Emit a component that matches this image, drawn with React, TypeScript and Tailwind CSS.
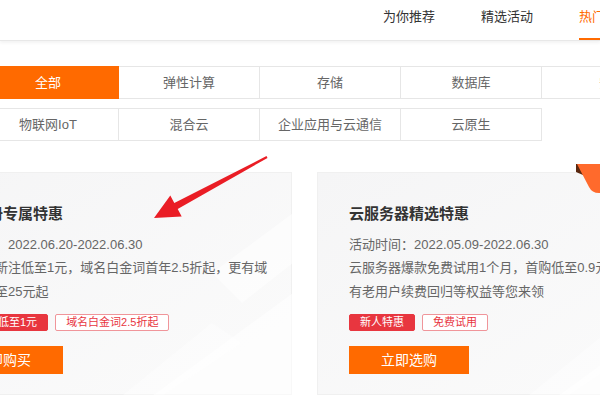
const navItems = ["为你推荐", "精选活动", "热门活动"];

const row1 = ["全部", "弹性计算", "存储", "数据库", "安全"];
const row2 = ["物联网IoT", "混合云", "企业应用与云通信", "云原生"];

interface Offer {
  title: string;
  time: string;
  lines: string[];
  tags: string[];
  button: string;
  badge?: boolean;
}

const offers: Offer[] = [
  {
    title: "域名注册专属特惠",
    time: "2022.06.20-2022.06.30",
    lines: ["热门域名新注低至1元，域名白金词首年2.5折起，更有域", "名转入低至25元起"],
    tags: ["域名新注低至1元", "域名白金词2.5折起"],
    button: "立即购买",
  },
  {
    title: "云服务器精选特惠",
    time: "2022.05.09-2022.06.30",
    lines: ["云服务器爆款免费试用1个月，首购低至0.9元起，更", "有老用户续费回归等权益等您来领"],
    tags: ["新人特惠", "免费试用"],
    button: "立即选购",
    badge: true,
  },
];

function TabRow({ items, active }: { items: string[]; active?: number }) {
  return (
    <div className="flex">
      {items.map((t, i) => (
        <div
          key={t}
          className={
            "w-[142px] h-[33px] shrink-0 flex items-center justify-center border text-[13px] " +
            (i > 0 ? "-ml-px " : "") +
            (i === active
              ? "bg-[#ff6a00] border-[#ff6a00] text-white relative"
              : "bg-white border-[#e6e6e6] text-[#666]")
          }
        >
          {t}
        </div>
      ))}
    </div>
  );
}

function OfferCard({ offer }: { offer: Offer }) {
  return (
    <div className="relative w-[381px] h-[223px] shrink-0 border border-[#f0f0f0] bg-gradient-to-br from-[#f5f5f6] to-[#fbfbfb] pl-[31px] pt-[31px]">
      <svg className="absolute inset-0 pointer-events-none" width="381" height="223" viewBox="0 0 381 223">
        <polygon points="240,223 381,120 381,223" fill="#ffffff" opacity="0.55" />
        <polygon points="300,100 381,40 381,90 330,130" fill="#ffffff" opacity="0.5" />
        <polygon points="210,223 300,150 330,170 250,223" fill="#ffffff" opacity="0.35" />
      </svg>
      {offer.badge && (
        <svg className="absolute left-[257px] top-[-10px]" width="40" height="34" viewBox="0 0 40 34">
          <polygon points="1,1 7,1 8,12 1,9" fill="#5a2810" />
          <path d="M2,1 H40 V30 H24 Q17,30 14,24 Z" fill="#ff6a2c" />
        </svg>
      )}
      <div className="relative">
        <div className="text-[15px] leading-[20px] font-bold text-[#333]">{offer.title}</div>
        <div className="mt-[10px] text-[13px] leading-[22px] text-[#666]">活动时间：{offer.time}</div>
        <div className="text-[13px] leading-[24px] text-[#666]">
          {offer.lines.map((l) => (
            <div key={l} className="whitespace-nowrap">{l}</div>
          ))}
        </div>
        <div className="mt-[10px] flex gap-[7px]">
          {offer.tags.map((t, i) => (
            <span
              key={t}
              className={
                "h-[17px] px-[10px] border text-[11px] leading-[15px] flex items-center rounded-[2px] " +
                (i === 0
                  ? "bg-[#e8363f] border-[#e8363f] text-white"
                  : "bg-white border-[#f0959a] text-[#e8363f]")
              }
            >
              {t}
            </span>
          ))}
        </div>
        <button className="mt-[15px] w-[120px] h-[28px] bg-[#ff6a00] text-white text-[14px] flex items-center justify-center">
          {offer.button}
        </button>
      </div>
    </div>
  );
}

export default function App() {
  return (
    <div className="relative w-[600px] h-[400px] overflow-hidden bg-white font-['Liberation_Sans','Noto_Sans_CJK_SC',sans-serif]">
      <div className="h-[41px] border-b border-[#e8e8e8] shadow-[0_2px_3px_rgba(0,0,0,0.05)] flex pl-[383px] gap-[46px]">
        {navItems.map((n, i) => (
          <div
            key={n}
            className={
              "shrink-0 h-[40px] pt-[8px] text-[13px] leading-[17px] " +
              (i === 2 ? "text-[#ff6a00] border-b-2 border-[#ff6a00]" : "text-[#333]")
            }
          >
            {n}
          </div>
        ))}
      </div>

      <div className="mt-[25px] ml-[-23px] flex flex-col gap-[9px]">
        <TabRow items={row1} active={0} />
        <TabRow items={row2} />
      </div>

      <div className="mt-[31px] ml-[-89px] flex gap-[25px]">
        {offers.map((o) => (
          <OfferCard key={o.title} offer={o} />
        ))}
      </div>

      <svg className="absolute left-[150px] top-[152px] pointer-events-none" width="122" height="70" viewBox="150 152 122 70">
        <polygon
          points="154,218 170.3,195.4 174.3,202.9 266.5,156.1 267.5,157.9 177.7,209.1 181.7,216.6"
          fill="#ea1d25"
        />
      </svg>
    </div>
  );
}
